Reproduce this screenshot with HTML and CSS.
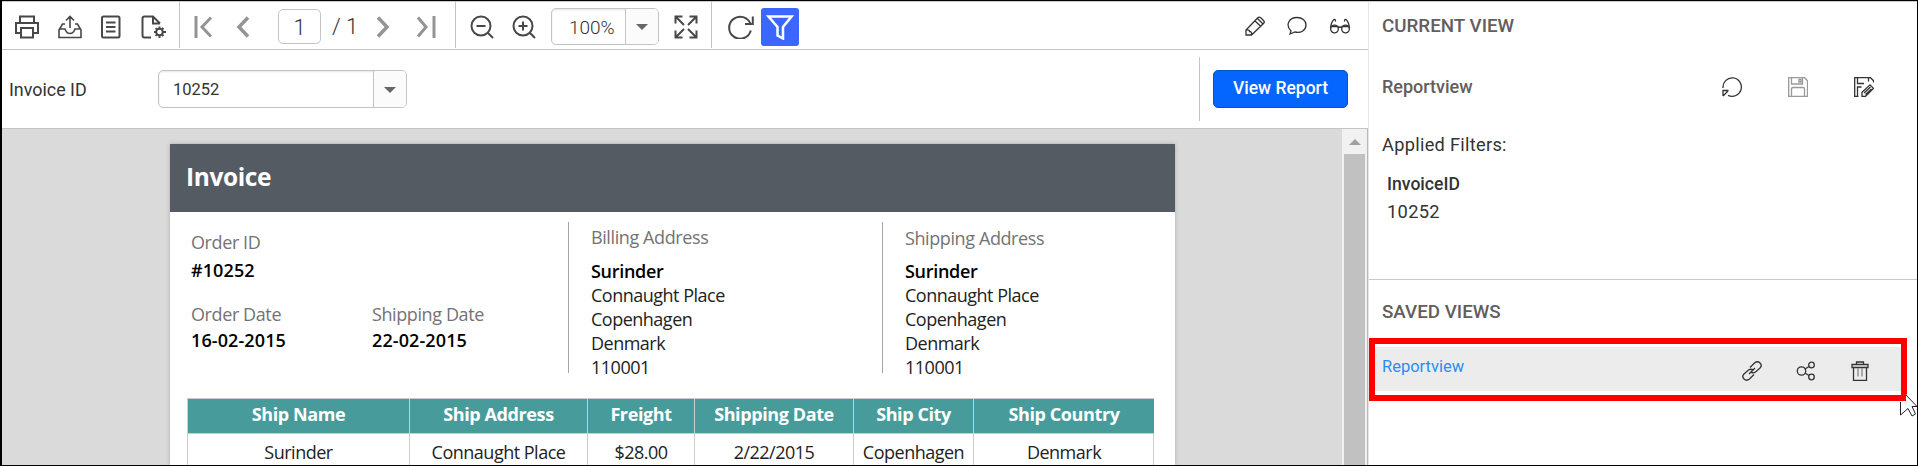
FILE: index.html
```html
<!DOCTYPE html>
<html lang="en">
<head>
<meta charset="utf-8">
<title>Invoice Report</title>
<link rel="stylesheet" href="styles.css">
</head>
<body>
<div class="app">
  <main class="viewer">
    <header class="toolbar">
      <div class="group files">
        <svg class="ico" width="24" height="24" viewBox="0 0 24 24"><path d="M5 8V1.500h14V8M5 18H1V8h22v10h-4M6 13h12v9.500H6z"/></svg>
        <svg class="ico thin" width="24" height="24" viewBox="0 0 24 24"><path d="M12 13V2M8 5.500 12 1.500 16 5.500M7 9H4.500L1 15v7.500h22V15l-3.500-6H17M1 14h6c1 3 2.500 4.500 5 4.500S16 17 17 14h6"/></svg>
        <svg class="ico" width="20" height="24" viewBox="0 0 20 24"><rect x="1" y="1.500" width="17.500" height="21" rx="1.500"/><path d="M5 7.500H14.500M5 12H14.500M5 16.500H14.500"/></svg>
        <svg class="ico" width="26" height="24" viewBox="0 0 26 24"><path d="M10 22.500H3.500Q1.500 22.500 1.500 20V3.500Q1.500 1.500 3.500 1.500H12L19 8.500M12 1.500V8.500H19"/><circle cx="18.500" cy="17" r="3.300"/><path d="M18.500 11.500v2M18.500 20.500v2.500M13 17h2M22 17h3M14.600 13.100l1.500 1.500M21 19.500l1.500 1.500M14.600 20.900l1.500-1.500M21 14.500l1.500-1.500"/></svg>
      </div>
      <div class="group pages">
        <svg class="nav first" width="19" height="24" viewBox="0 0 19 24"><path d="M2 1v22M17 2.500 8 12l9 9.500"/></svg>
        <svg class="nav prev" width="14" height="24" viewBox="0 0 14 24"><path d="M12 2.500 3 12l9 9.500"/></svg>
        <span class="page-box">1</span>
        <span class="page-total">/ 1</span>
        <svg class="nav next" width="14" height="24" viewBox="0 0 14 24"><path d="M2 2.500 11 12l-9 9.500"/></svg>
        <svg class="nav last" width="19" height="24" viewBox="0 0 19 24"><path d="M17 1v22M1 2.500 9 12l-8 9.500"/></svg>
      </div>
      <div class="group zoom">
        <svg class="ico" width="24" height="24" viewBox="0 0 24 24"><circle cx="11" cy="11" r="9.500"/><path d="M6.500 11h9M18 18l5 5"/></svg>
        <svg class="ico zin" width="24" height="24" viewBox="0 0 24 24"><circle cx="11" cy="11" r="9.500"/><path d="M6.500 11h9M11 6.500v9M18 18l5 5"/></svg>
        <span class="combo zoom-combo"><span class="combo-text">100%</span><span class="combo-btn"><i class="caret"></i></span></span>
        <svg class="ico" width="24" height="24" viewBox="0 0 24 24"><path d="M1.500 8.500v-7h7M1.500 1.500 10 10M15.500 1.500h7v7M22.500 1.500 14 10M1.500 15.500v7h7M1.500 22.500 10 14M15.500 22.500h7v-7M22.500 22.500 14 14"/></svg>
      </div>
      <div class="group act">
        <svg class="ico" width="27" height="24" viewBox="0 0 27 24"><path d="M22.500 9A11 11 0 1 0 22.800 15.500M24.800 1.500V9H17"/></svg>
        <span class="filter"><svg width="28" height="26" viewBox="0 0 28 26"><path d="M2.500 2.500h23L17 13v11.500l-5.500-3V13z"/></svg></span>
      </div>
      <div class="notes">
        <svg class="fine" width="20" height="20" viewBox="0 0 20 20"><path d="M1 19v-5L12.500 2Q14 .500 15.500 1.500l3 3q1.500 1.500 0 3L6.500 19zM10 5l5.500 5M12.500 2.500l5.500 5.500M1.500 14q3-.5 3 1.500 2.500 0 2 3"/></svg>
        <svg class="fine" width="20" height="20" viewBox="0 0 20 20"><path d="M3 18l1-3C-2 9 2 1.500 10 1.500c5 0 9 3 9 7.500 0 5-5 8.500-11 7z"/></svg>
        <svg class="fine" width="22" height="20" viewBox="0 0 22 20"><circle cx="5.500" cy="13" r="3.800"/><circle cx="16.500" cy="13" r="3.800"/><path d="M9.300 12q1.700-2 3.400 0M1.500 12C2 8 3 5 5 3.500q1.500-.5 1.500 2M20.500 12C20 8 19 5 17 3.500q-1.500-.5-1.500 2M2 10.500h7.500M12.500 10.500H20"/></svg>
      </div>
    </header>
    <section class="params">
      <label class="param-label">Invoice ID</label>
      <span class="combo param-combo"><span class="combo-text">10252</span><span class="combo-btn"><i class="caret"></i></span></span>
      <div class="submit"><button class="view-btn">View Report</button></div>
    </section>
    <section class="canvas">
      <article class="sheet">
        <h1 class="title">Invoice</h1>
        <div class="info">
          <div class="orders">
            <div class="order-id"><p class="cap">Order ID</p><p class="val">#10252</p></div>
            <div><p class="cap">Order Date</p><p class="val">16-02-2015</p></div>
            <div><p class="cap">Shipping Date</p><p class="val">22-02-2015</p></div>
          </div>
          <div class="address">
            <p class="cap">Billing Address</p><p class="val">Surinder</p>
            <p>Connaught Place</p><p>Copenhagen</p><p>Denmark</p><p>110001</p>
          </div>
          <div class="address ship">
            <p class="cap">Shipping Address</p><p class="val">Surinder</p>
            <p>Connaught Place</p><p>Copenhagen</p><p>Denmark</p><p>110001</p>
          </div>
        </div>
        <div class="table">
          <b>Ship Name</b><b>Ship Address</b><b>Freight</b><b>Shipping Date</b><b>Ship City</b><b>Ship Country</b>
          <span>Surinder</span><span>Connaught Place</span><span>$28.00</span><span>2/22/2015</span><span>Copenhagen</span><span>Denmark</span>
        </div>
      </article>
      <div class="scroll"><i class="up"></i><i class="thumb"></i></div>
    </section>
  </main>
  <aside class="panel">
    <section class="current">
      <h2>CURRENT VIEW</h2>
      <div class="view-row">
        <strong>Reportview</strong>
        <div class="view-icons">
          <svg class="fine" width="20" height="20" viewBox="0 0 20 20"><path d="M1 11A9.200 9.200 0 1 1 6 18.300M1 19v-5.500h5.500M1 19l5-5"/></svg>
          <svg class="fine off" width="20" height="20" viewBox="0 0 20 20"><path d="M.7.700h15.800l3 3v15.800H.7zM3.500.500v6.500h11V.500M3.500 19.500v-7.500q0-1.500 1.500-1.500h10q1.500 0 1.500 1.500v7.500M11 2.500h2v2.500h-2z"/></svg>
          <svg class="fine" width="20" height="20" viewBox="0 0 20 20"><path d="M4.500 19.500H.7V.700h15.800l3 3V5.500M3.500.500v6H10M14.500.500v4M3.500 19V10H7.500M8 19.300v-4l8-7.500 3.500 3.500-8 8zM10 16l6.500-6M11.500 17.500l6-5.500"/></svg>
        </div>
      </div>
      <p class="applied">Applied Filters:</p>
      <dl><dt>InvoiceID</dt><dd>10252</dd></dl>
    </section>
    <section class="saved">
      <h2>SAVED VIEWS</h2>
      <div class="highlight">
        <div class="saved-row">
          <a>Reportview</a>
          <div class="saved-icons">
            <svg class="fine" width="20" height="20" viewBox="0 0 20 20"><path d="M8 6.500 12.500 2Q15.500-.5 18 2t0 5L13.500 11Q11 12.500 8.500 11M12 13.500 7.500 18Q4.500 20.500 2 18t0-5L6.500 9Q9 7.500 11.500 9M7 13l6-6"/></svg>
            <svg class="fine" width="20" height="20" viewBox="0 0 20 20"><circle cx="5.500" cy="10" r="4.200"/><circle cx="15.500" cy="4" r="2.800"/><circle cx="15.500" cy="16" r="2.800"/><path d="M9 8l4-2.500M9 12l4 2.500"/></svg>
            <svg class="fine" width="20" height="20" viewBox="0 0 20 20"><path d="M2 3.500h16v3H2zM6.500 3.500v-2.500h7v2.500M3.500 6.500v13h13v-13"/><path d="M8 7v8.500M12 7v8.500" stroke="#888"/></svg>
          </div>
        </div>
      </div>
    </section>
  </aside>
  <svg class="cursor" width="17" height="24" viewBox="0 0 17 24"><path d="M6 0 17 12H11l4 8-3.500 2L7 14 1 20V7.500h5z" fill="#fff"/><path d="M6 1 17 12.500H12l3.500 7.500-3.500 2L8 14.500.500 21V8" fill="none" stroke="#223"/></svg>
</div>
</body>
</html>
```
FILE: styles.css
```css
* { box-sizing: border-box; margin: 0; }
body { margin: 0; font-family: Roboto, "Liberation Sans", sans-serif; font-size: 18px; color: #333; }
.app { position: relative; display: flex; width: 1918px; height: 466px; overflow: hidden; background: #fff; border: 1px solid #000; border-left-width: 2px; }
svg { display: block; flex: none; fill: none; }
.viewer { flex: none; width: 1366px; height: 464px; display: flex; flex-direction: column; border-top: 1px solid #ccc; }
.toolbar { flex: none; display: flex; height: 48px; border-bottom: 1px solid #c4c4c4; }
.group { flex: none; display: flex; align-items: center; height: 46px; border-right: 1px solid #c4c4c4; }
.ico { stroke: #484848; stroke-width: 2; margin-top: 3px; }
.thin { stroke-width: 1.600; }
.files { width: 178px; padding-left: 13px; gap: 19px; }
.files svg:nth-child(4) { margin-left: 1px; }
.nav { stroke: #949494; stroke-width: 3.500; margin-top: 3px; }
.first, .last { stroke-width: 3; }
.pages { width: 276px; }
.first { margin-left: 14px; }
.prev { margin-left: 23px; }
.page-box { width: 43px; height: 35px; margin: 3px 0 0 28px; border: 1px solid #c4c4c4; border-radius: 5px; text-align: center; font-size: 22px; font-weight: 300; line-height: 35px; }
.page-total { margin: 3px 0 0 11px; width: 26px; font-size: 22px; font-weight: 300; line-height: 35px; white-space: nowrap; }
.next { margin-left: 18px; }
.last { margin-left: 27px; }
.zoom { width: 256px; padding-left: 14px; }
.zin { margin-left: 18px; }
.combo { display: flex; border: 1px solid #c4c4c4; border-radius: 5px; overflow: hidden; box-shadow: inset 0 1px 2px #e4e4e4; }
.combo-text { flex: 1; }
.combo-btn { display: flex; align-items: center; justify-content: center; width: 33px; border-left: 1px solid #c4c4c4; background: #fbfbfb; }
.caret { border: 6px solid transparent; border-top: 6px solid #666; border-bottom: 0; margin: 2px 1px 0 0; }
.zoom-combo { width: 108px; height: 37px; margin: 2px 15px 0 15px; }
.zoom-combo .combo-text { padding-left: 17px; font-size: 19px; font-weight: 300; line-height: 37px; }
.act { border: 0; padding-left: 16px; }
.filter { width: 38px; height: 38px; margin: 3px 0 0 6px; padding: 6px 5px; background: #3b66ff; border-radius: 3px; }
.filter path { stroke: #fff; stroke-width: 2.500; }
.notes { display: flex; gap: 22px; margin: 14px 17px 0 auto; }
.fine { stroke: #333; stroke-width: 1.300; }
.params { flex: none; display: flex; height: 79px; padding: 20px 0 0 7px; border-bottom: 1px solid #c4c4c4; }
.param-label { width: 149px; line-height: 40px; font-size: 17.900px; }
.param-combo { width: 249px; height: 38px; }
.param-combo .combo-text { padding-left: 14px; font-size: 16.500px; line-height: 38px; }
.submit { width: 169px; height: 64px; margin: -13px 0 0 auto; padding: 13px 0 0 13px; border-left: 1px solid #c4c4c4; }
.view-btn { width: 135px; height: 38px; border: 1px solid #0550cc; border-radius: 5px; background: #0565ff; color: #fff; font: 500 17.500px/34px Roboto, sans-serif; padding: 0 0 2px; }
.canvas { flex: 1; display: flex; min-height: 0; background: #dadada; overflow: hidden; border-right: 1px solid #b8b8b8; }
.sheet { flex: none; width: 1005px; height: 400px; margin: 15px 0 0 168px; background: #fff; box-shadow: 0 0 4px #aaa; font: 18px/24px "Open Sans", "Noto Sans", sans-serif; letter-spacing: -.5px; color: #222; }
.title { height: 68px; padding-left: 16px; background: #555b63; color: #fff; font-size: 24.500px; line-height: 66px; letter-spacing: -.4px; }
.info { display: flex; height: 186px; padding: 10px 0 0 21px; }
.orders { flex: none; display: grid; grid-template-columns: 181px 1fr; grid-template-rows: 72px 1fr; width: 378px; height: 151px; border-right: 1px solid #a4a4a4; }
.order-id { grid-column: span 2; }
.cap { color: #737373; letter-spacing: -.4px; }
.orders .cap { line-height: 24px; padding-top: 8px; }
.orders .val { line-height: 28px; letter-spacing: .1px; }
.orders .order-id .val { line-height: 32px; }
.val { font-weight: 600; color: #000; letter-spacing: -.3px; }
.address { flex: none; width: 314px; height: 151px; padding: 3px 0 0 22px; border-right: 1px solid #a4a4a4; }
.address .val { margin-top: 10px; }
.ship { border: 0; padding-top: 4px; }
.ship .val { margin-top: 9px; }
.table { display: grid; grid-template-columns: 222px 178px 107px 159px 120px 180px; width: 967px; margin-left: 17px; border: 1px solid #ccc; border-bottom: 0; text-align: center; }
.table b { height: 35px; background: #479c9b; color: #fff; line-height: 31px; letter-spacing: -.4px; border-right: 1px solid #ccc; border-bottom: 1px solid #ccc; }
.table span { height: 40px; line-height: 36px; border-right: 1px solid #ccc; }
.table b:nth-child(6), .table span:last-child { border-right: 0; }
.scroll { width: 25px; margin-left: auto; background: #f1f1f1; display: flex; flex-direction: column; align-items: center; padding: 10px 2px 0 2px; }
.up { border: 6px solid transparent; border-top: 0; border-bottom: 6px solid #a0a0a0; }
.thumb { width: 21px; flex: 1; margin-top: 9px; background: #c1c1c1; }
.panel { width: 549px; border-left: 1px solid #e4e4e4; border-top: 1px solid #ccc; }
h2, .view-row strong { font-size: 18px; font-weight: 500; color: #635d5d; line-height: 24px; }
h2 { font-size: 18.800px; }
.current { height: 278px; padding: 12px 0 0 13px; border-bottom: 1px solid #c8c8c8; }
.view-row { display: flex; margin-top: 37px; }
.view-icons { display: flex; gap: 46px; margin: 2px 43px 0 auto; }
.off { stroke: #999; }
.applied { margin-top: 34px; line-height: 24px; font-size: 18.200px; letter-spacing: .3px; }
dl { margin-top: 13px; padding-left: 5px; font-size: 17.600px; line-height: 28px; }
dt { font-weight: 500; }
dd { margin: 0; font-size: 18.300px; letter-spacing: .3px; }
.saved h2 { padding: 20px 0 0 13px; height: 58px; }
.highlight { width: 538px; height: 63px; border: 6px solid red; padding: 3px 0 4px; }
.saved-row { display: flex; height: 44px; background: #ececec; padding-left: 7px; }
.saved-row a { color: #2a8cf4; font-size: 16.500px; line-height: 40px; }
.saved-icons { display: flex; gap: 34px; margin: 14px 31px 0 auto; }
.cursor { position: absolute; left: 1898px; top: 393px; clip-path: polygon(0 8px, 6px 8px, 6px 0, 17px 0, 17px 24px, 0 24px); }
```
